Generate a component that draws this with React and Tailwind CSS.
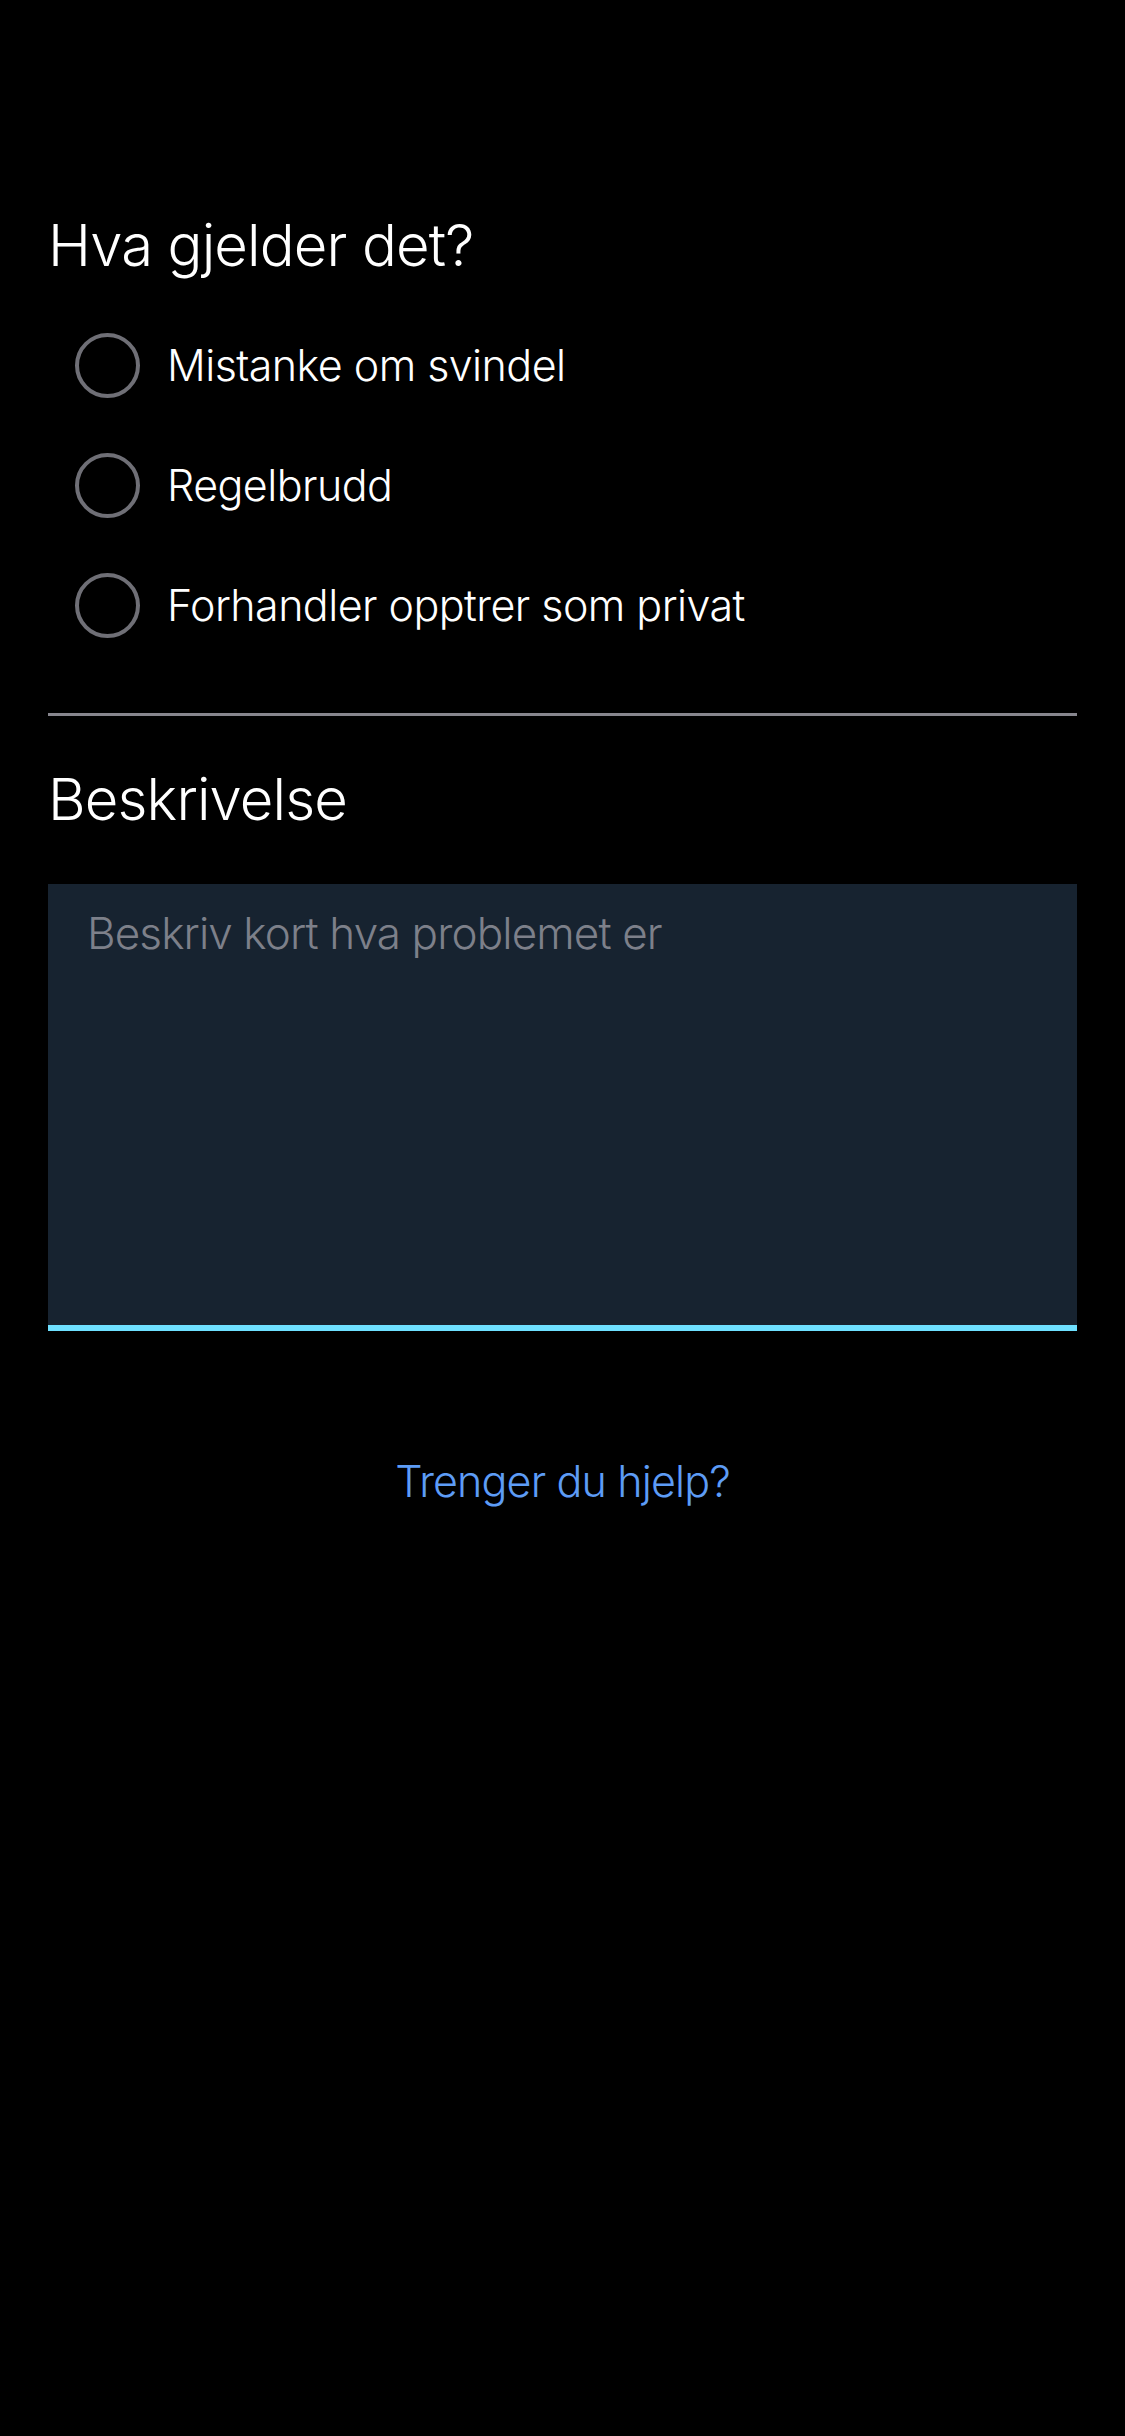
import { useState } from "react";

const reasons = [
  { id: "svindel", label: "Mistanke om svindel" },
  { id: "regelbrudd", label: "Regelbrudd" },
  { id: "forhandler", label: "Forhandler opptrer som privat" },
];

export default function App() {
  const [reason, setReason] = useState("");
  const [description, setDescription] = useState("");

  return (
    <div
      className="min-h-[2436px] w-full bg-black text-white"
      style={{ fontFamily: "Inter, 'Noto Sans', sans-serif" }}
    >
      <div className="px-[48px] pt-[210px]">
        {/* Reason */}
        <fieldset>
          <legend className="text-[58px] leading-[70px] font-light tracking-[-0.015em]">
            Hva gjelder det?
          </legend>
          <div className="mt-[25px] flex flex-col">
            {reasons.map((r) => (
              <label
                key={r.id}
                className="flex h-[120px] cursor-pointer items-center pl-[27px]"
              >
                <input
                  type="radio"
                  name="reason"
                  value={r.id}
                  checked={reason === r.id}
                  onChange={() => setReason(r.id)}
                  className="h-[65px] w-[65px] shrink-0 cursor-pointer appearance-none rounded-full border-[4px] border-[#6f6f76] checked:border-[20px] checked:border-[#6ee0ff]"
                />
                <span className="ml-[27px] text-[43px] leading-[54px] font-light tracking-[-0.013em]">
                  {r.label}
                </span>
              </label>
            ))}
          </div>
        </fieldset>

        <div className="mt-[48px] h-[3px] bg-[#87868e]" />

        {/* Description */}
        <label
          htmlFor="description"
          className="mt-[48px] block text-[58px] leading-[70px] font-light tracking-[-0.015em]"
        >
          Beskrivelse
        </label>
        <textarea
          id="description"
          value={description}
          onChange={(e) => setDescription(e.target.value)}
          placeholder="Beskriv kort hva problemet er"
          className="mt-[50px] block h-[447px] w-full resize-none border-b-[6px] border-[#6ee0ff] bg-[#172330] px-[39px] pt-[22px] text-[44px] leading-[55px] font-light tracking-[-0.02em] text-white outline-none placeholder:text-[#7d808a]"
          style={{ fontFamily: "Inter, 'Noto Sans', sans-serif" }}
        />

        <div className="mt-[122px] text-center">
          <button
            type="button"
            className="text-[43px] leading-[56px] font-light tracking-[-0.02em] text-[#5d9cf6]"
          >
            Trenger du hjelp?
          </button>
        </div>
      </div>
    </div>
  );
}
